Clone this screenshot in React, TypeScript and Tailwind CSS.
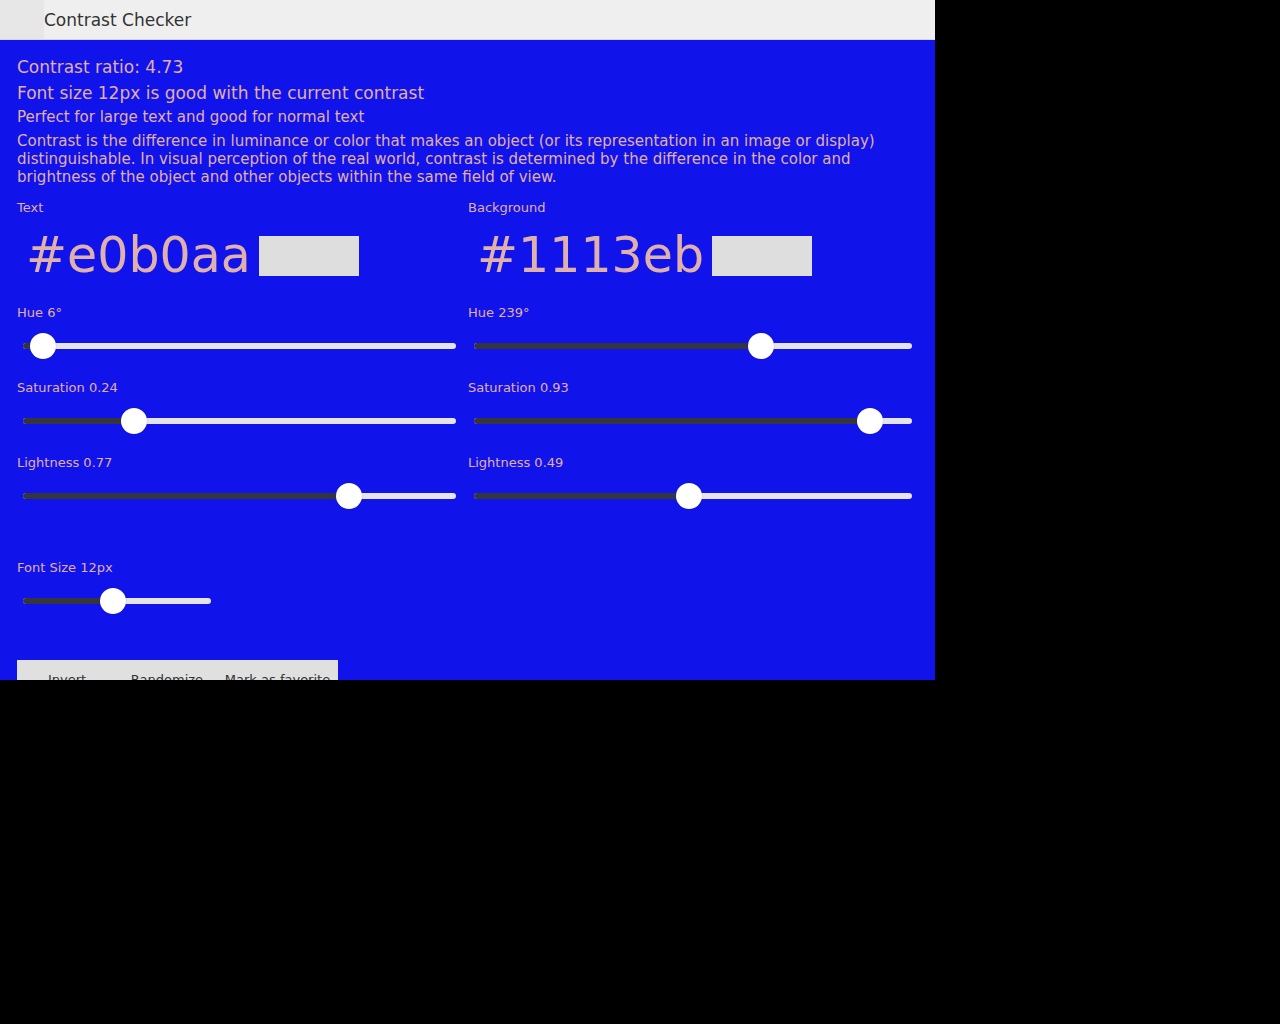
import React from 'react';

const font = { fontFamily: '"DejaVu Sans", Verdana, sans-serif' };

interface SliderProps {
  label: string;
  value: number; // 0..1
  narrow?: boolean;
}

function Slider({ label, value, narrow }: SliderProps) {
  return (
    <div className="flex flex-col">
      <div className="text-[13px] leading-4 h-4">{label}</div>
      <div className={`relative h-[26px] mt-[12px] mx-[6px] ${narrow ? 'w-[188px]' : ''}`}>
        <div className="absolute left-0 right-0 top-[10px] h-[6px] rounded-full bg-[#e4e4ea]" />
        <div
          className="absolute left-0 top-[10px] h-[6px] rounded-full bg-[#35353d]"
          style={{ width: `calc(${value} * (100% - 26px) + 13px)` }}
        />
        <div
          className="absolute top-0 w-[26px] h-[26px] rounded-full bg-white shadow-[0_0_1px_rgba(0,0,0,0.4)]"
          style={{ left: `calc(${value} * (100% - 26px))` }}
        />
      </div>
    </div>
  );
}

function ColorColumn({ title, hex, hue, sat, light }: { title: string; hex: string; hue: number; sat: number; light: number }) {
  return (
    <div className="flex flex-col">
      <div className="text-[13px] leading-4 h-4">{title}</div>
      <div className="flex items-center mt-[20px] pl-[9px] h-[40px]">
        <span className="text-[49px] leading-none text-[#e0b0aa] -mt-[1px]">{hex}</span>
        <span className="ml-[8px] w-[100px] h-[40px] bg-[#dedede]" />
      </div>
      <div className="mt-[29px] flex flex-col gap-[21px]">
        <Slider label={`Hue ${hue}°`} value={hue / 360} />
        <Slider label={`Saturation ${sat}`} value={sat} />
        <Slider label={`Lightness ${light}`} value={light} />
      </div>
    </div>
  );
}

export default function App() {
  return (
    <div className="h-[1024px] bg-black" style={font}>
      <div className="w-[935px] h-[680px] overflow-hidden flex flex-col bg-[#1113eb]">
        <header className="h-[40px] shrink-0 flex bg-[#efefef] border-b border-[#d8d8d8]">
          <div className="w-[44px] bg-[#e7e7e7]" />
          <h1 className="text-[17px] leading-[39px] pt-[1px] text-[#333]">Contrast Checker</h1>
        </header>
        <main className="px-[17px] pt-[14px] text-[#e0b0aa]">
          <p className="text-[17px] leading-[26px]">Contrast ratio: 4.73</p>
          <p className="text-[17px] leading-[26px]">Font size 12px is good with the current contrast</p>
          <p className="text-[15px] leading-[22px]">Perfect for large text and good for normal text</p>
          <p className="text-[15px] leading-[18px] mt-[4px]">
            Contrast is the difference in luminance or color that makes an object (or its representation in an
            image or display) distinguishable. In visual perception of the real world, contrast is determined by the
            difference in the color and brightness of the object and other objects within the same field of view.
          </p>
          <div className="grid grid-cols-[445px_1fr] gap-x-[6px] mt-[14px]">
            <ColorColumn title="Text" hex="#e0b0aa" hue={6} sat={0.24} light={0.77} />
            <ColorColumn title="Background" hex="#1113eb" hue={239} sat={0.93} light={0.49} />
          </div>
          <div className="mt-[51px]">
            <Slider label="Font Size 12px" value={0.475} narrow />
          </div>
          <div className="mt-[46px] inline-flex bg-[#e0e0e0] text-[13px] leading-4 text-[#333] pt-[12px]">
            <button className="w-[100px] text-center">Invert</button>
            <button className="w-[100px] text-center">Randomize</button>
            <button className="w-[121px] text-center">Mark as favorite</button>
          </div>
        </main>
      </div>
    </div>
  );
}
